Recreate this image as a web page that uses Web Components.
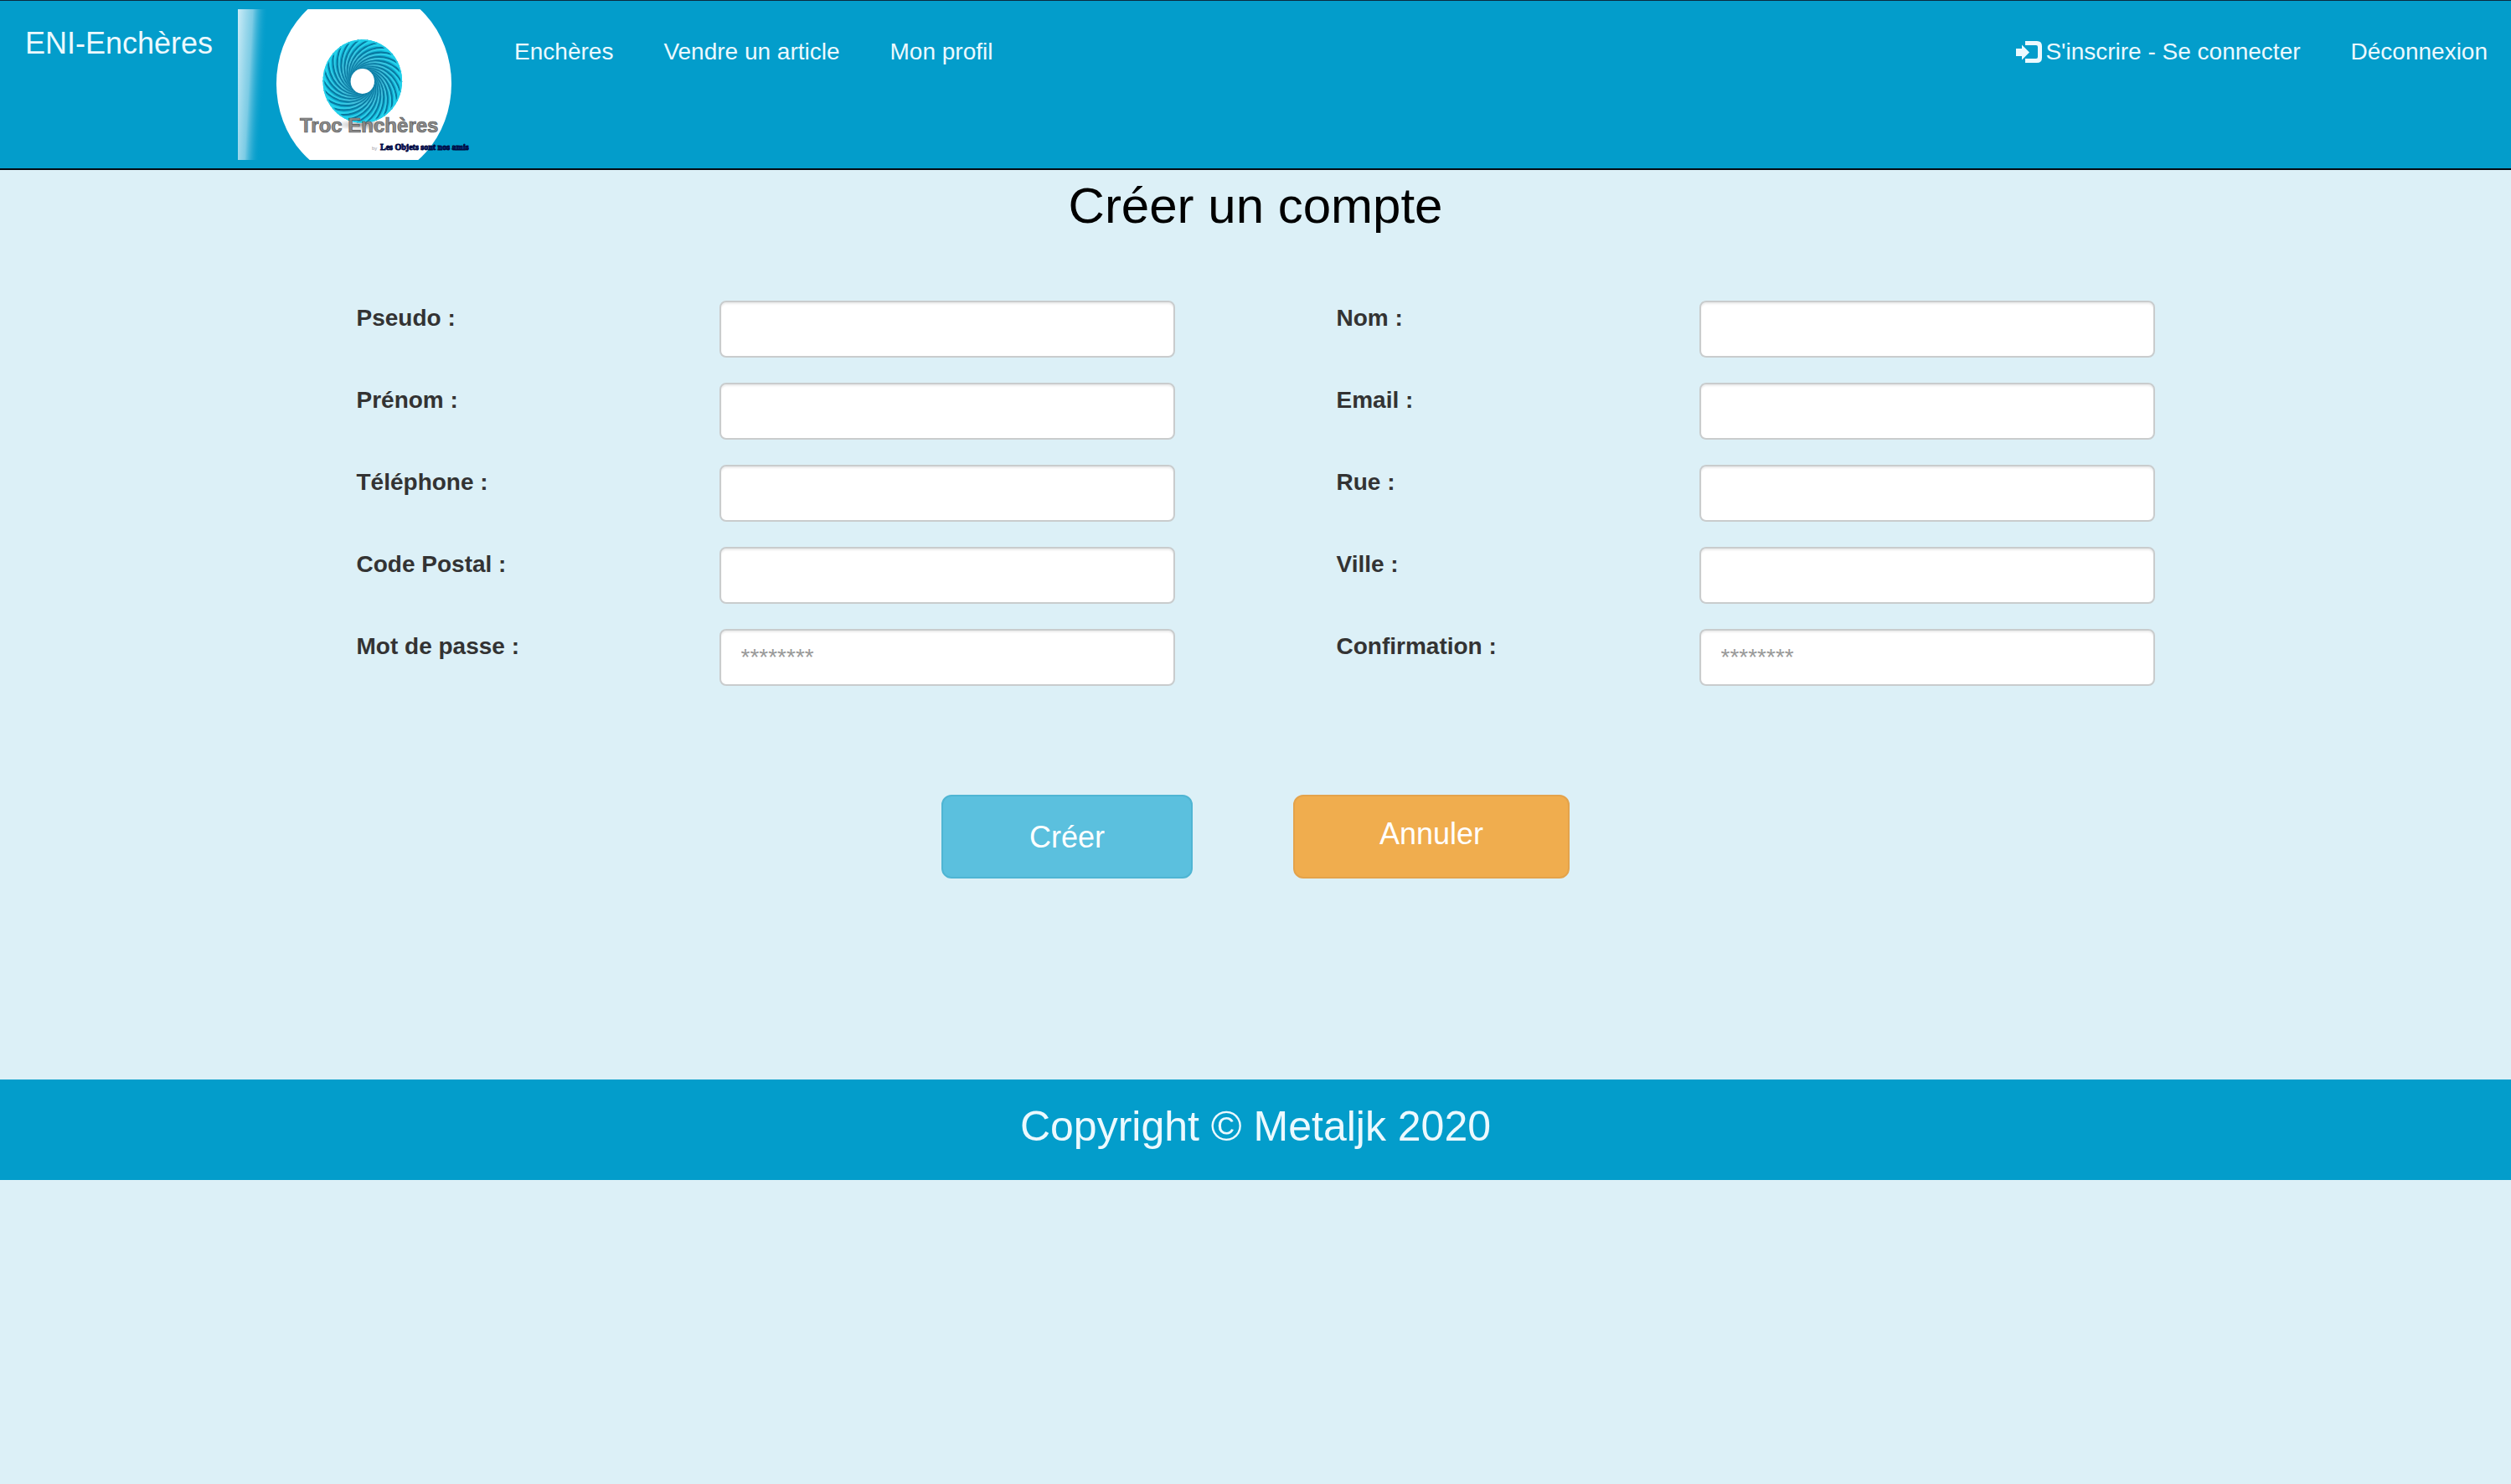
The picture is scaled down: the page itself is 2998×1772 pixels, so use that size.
<!DOCTYPE html>
<html lang="fr">
<head>
<meta charset="utf-8">
<meta name="viewport" content="width=device-width, initial-scale=1">
<title>ENI-Enchères - Créer un compte</title>
<style>
  html { background: #dcf0f7; }
  body {
    margin: 0;
    font-family: "Liberation Sans", Arial, sans-serif;
    font-size: 28px;
    line-height: 42px;
    color: #333;
    --bar: #039dcb;
    --bar-text: #ecf9fe;
  }
</style>
</head>
<body>
<eni-navbar>
  <eni-nav-link href="#encheres">Enchères</eni-nav-link>
  <eni-nav-link href="#vendre">Vendre un article</eni-nav-link>
  <eni-nav-link href="#profil">Mon profil</eni-nav-link>
  <eni-nav-link slot="right" href="#connexion" icon="log-in">S'inscrire - Se connecter</eni-nav-link>
  <eni-nav-link slot="right" href="#deconnexion">Déconnexion</eni-nav-link>
</eni-navbar>

<eni-account-form>
  <span slot="title">Créer un compte</span>
  <eni-field name="pseudo" label="Pseudo :"></eni-field>
  <eni-field name="nom" label="Nom :"></eni-field>
  <eni-field name="prenom" label="Prénom :"></eni-field>
  <eni-field name="email" label="Email :" type="email"></eni-field>
  <eni-field name="telephone" label="Téléphone :" type="tel"></eni-field>
  <eni-field name="rue" label="Rue :"></eni-field>
  <eni-field name="codePostal" label="Code Postal :"></eni-field>
  <eni-field name="ville" label="Ville :"></eni-field>
  <eni-field name="motDePasse" label="Mot de passe :" type="password" placeholder="********"></eni-field>
  <eni-field name="confirmation" label="Confirmation :" type="password" placeholder="********"></eni-field>
</eni-account-form>

<eni-footer>Copyright © Metaljk 2020</eni-footer>

<script>
class EniElement extends HTMLElement {
  connectedCallback() {
    if (!this.shadowRoot) this.attachShadow({ mode: 'open' }).innerHTML = this.render();
  }
}

customElements.define('eni-logo', class extends EniElement {
  render() {
    // One blade sweeps clockwise from the hole to the rim; it is repeated around the disc.
    const count = 26;
    let blades = '';
    for (let i = 0; i < count; i++) {
      blades += `<g transform="rotate(${i * 360 / count})">
        <path d="M0-.3C.42-.42.84-.12.93.34" stroke="#0878a0" stroke-width=".045" transform="rotate(-5)"/>
        <path d="M0-.3C.42-.42.84-.12.93.34" stroke="url(#edge)" stroke-width=".04"/></g>`;
    }
    return `<style>
      :host { display: block; width: 300px; height: 180px; }
      svg { display: block; width: 100%; height: 100%; }
    </style>
    <svg viewBox="0 0 300 180" role="img" aria-label="Troc Enchères">
      <defs>
        <linearGradient id="sheen" gradientUnits="userSpaceOnUse" x1="0" y1="0" x2="36" y2="2">
          <stop offset="0" stop-color="#cdecf7"/><stop offset=".5" stop-color="#9ad7eb" stop-opacity=".8"/><stop offset="1" stop-color="#039dcb" stop-opacity="0"/>
        </linearGradient>
        <radialGradient id="disc" cx="0" cy="0" r="1" gradientUnits="userSpaceOnUse">
          <stop offset=".3" stop-color="#075f82"/><stop offset=".6" stop-color="#0b8ab2"/><stop offset=".85" stop-color="#10b4d6"/><stop offset="1" stop-color="#22d3ee"/>
        </radialGradient>
        <radialGradient id="edge" cx="0" cy="0" r="1" gradientUnits="userSpaceOnUse" >
          <stop offset=".3" stop-color="#1687ae"/><stop offset=".55" stop-color="#42c0dc"/><stop offset="1" stop-color="#20d8f0"/>
        </radialGradient>
        <radialGradient id="shade"><stop offset="0" stop-color="#777" stop-opacity=".7"/><stop offset="1" stop-color="#999" stop-opacity="0"/></radialGradient>
      </defs>
      <path d="M0 0H38L30 180H0Z" fill="url(#sheen)"/>
      <ellipse cx="150.5" cy="89" rx="104.5" ry="116" fill="#fff"/>
      <ellipse cx="149" cy="138" rx="34" ry="7" fill="url(#shade)"/>
      <g transform="translate(148.8 86) scale(47.3 49.8)" fill="none">
        <circle r="1" fill="url(#disc)"/>
        ${blades}
        <circle r=".98" stroke="#22cfea" stroke-width=".035"/>
        <circle r=".3" fill="#fff"/>
      </g>
      <text x="74" y="147" font-family="Liberation Sans, Arial, sans-serif" font-weight="700" font-size="24" fill="#8c8c8c" stroke="#555" stroke-width=".7">Troc Enchères</text>
      <text x="160" y="168" font-family="Liberation Sans, Arial, sans-serif" font-size="6" fill="#9a9aa5">by</text>
      <text x="170" y="168" font-family="Liberation Serif, serif" font-weight="700" font-size="10" fill="#0a2a9c" stroke="#00073c" stroke-width=".9">Les Objets sont nos amis</text>
    </svg>`;
  }
});

customElements.define('eni-nav-link', class extends EniElement {
  render() {
    const icon = this.getAttribute('icon') === 'log-in'
      ? `<svg viewBox="0 0 31 26" aria-hidden="true"><path d="M0 9H7V4.500L16 13.500 7 22.500V18H0Z"/><path d="M11 0H25Q31 0 31 6V20Q31 26 25 26H11V21H24Q26 21 26 19V7Q26 5 24 5H11Z"/></svg>`
      : '';
    return `<style>
      :host { display: block; }
      a { display: flex; align-items: center; gap: 4px; padding: 40px 30px; color: var(--bar-text); text-decoration: none; white-space: nowrap; }
      a:hover { color: #fff; }
      svg { width: 31px; height: 26px; fill: currentColor; }
    </style><a href="${this.getAttribute('href')}">${icon}<span><slot></slot></span></a>`;
  }
});

customElements.define('eni-navbar', class extends EniElement {
  render() {
    return `<style>
      :host { display: block; overflow: hidden; background: var(--bar); border-top: 1px solid #0b2a3e; border-bottom: 2px solid #020a12; }
      nav, .links { display: flex; align-items: flex-start; }
      .brand { padding: 30px; font-size: 36px; color: var(--bar-text); text-decoration: none; }
      eni-logo { margin: 10px 0; }
      .right { margin: 0 -2px 0 auto; }
    </style>
    <nav>
      <a class="brand" href="#accueil">ENI-Enchères</a>
      <eni-logo></eni-logo>
      <div class="links"><slot></slot></div>
      <div class="links right"><slot name="right"></slot></div>
    </nav>`;
  }
});

customElements.define('eni-field', class extends EniElement {
  render() {
    const name = this.getAttribute('name');
    return `<style>
      :host { display: flex; align-items: flex-start; }
      label { flex: 1; font-weight: 700; }
      input {
        box-sizing: border-box; width: 544px; max-width: 60%; height: 68px; padding: 12px 24px; margin: 0;
        font: inherit; color: #555; background: #fff;
        border: 2px solid #c9cccd; border-radius: 8px;
        box-shadow: inset 0 2px 2px rgba(0, 0, 0, .075);
      }
      input::placeholder { color: #999; opacity: 1; }
    </style>
    <label for="${name}">${this.getAttribute('label')}</label>
    <input id="${name}" name="${name}" type="${this.getAttribute('type') || 'text'}" placeholder="${this.getAttribute('placeholder') || ''}">`;
  }
});

customElements.define('eni-account-form', class extends EniElement {
  render() {
    return `<style>
      :host { display: block; padding: 10px 30px 240px; }
      h1 { margin: 0 0 80px; font-size: 60px; font-weight: 400; line-height: 66px; text-align: center; color: #000; }
      .fields { display: grid; grid-template-columns: 1fr 1fr; gap: 30px 193px; max-width: 2147px; margin: 0 auto; }
      .actions { display: flex; justify-content: center; gap: 120px; margin-top: 130px; }
      .btn {
        box-sizing: border-box; height: 100px; padding: 21px 32px 19px; margin: 0;
        font: inherit; font-size: 36px; line-height: 48px; text-align: center; text-decoration: none;
        color: #fff; border: 2px solid; border-radius: 12px; cursor: pointer;
      }
      .info { width: 300px; background: #5bc0de; border-color: #4fb5d3; }
      .warning { width: 330px; background: #f0ad4e; border-color: #e4a34b; }
    </style>
    <form>
      <h1><slot name="title"></slot></h1>
      <div class="fields"><slot></slot></div>
      <div class="actions">
        <button class="btn info" type="submit">Créer</button>
        <a class="btn warning" href="#accueil">Annuler</a>
      </div>
    </form>`;
  }
});

customElements.define('eni-footer', class extends EniElement {
  render() {
    return `<style>
      :host { display: block; background: var(--bar); }
      footer { padding: 28px 30px 36px; font-size: 50px; line-height: 56px; text-align: center; color: var(--bar-text); }
    </style><footer><slot></slot></footer>`;
  }
});
</script>
</body>
</html>
